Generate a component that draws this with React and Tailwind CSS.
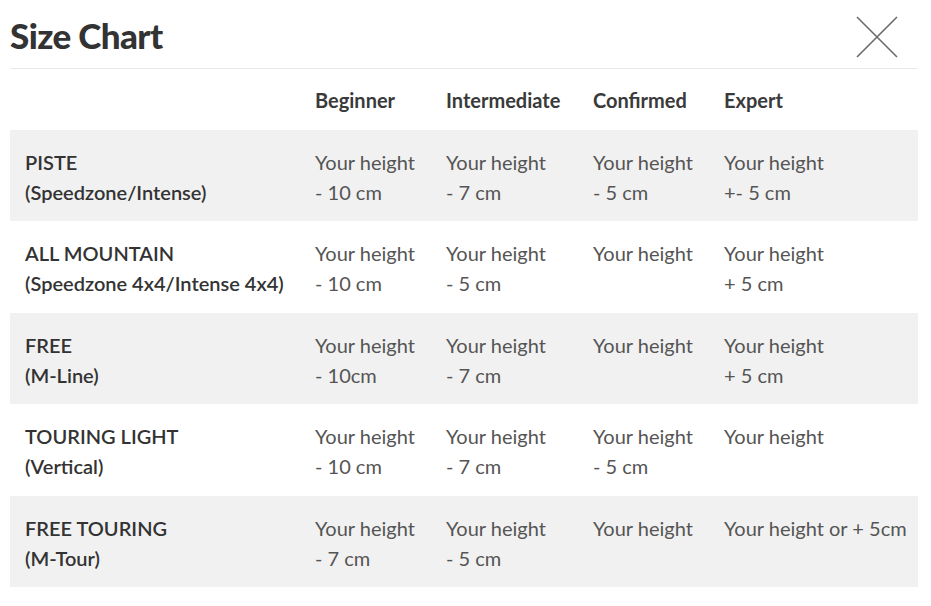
import React from 'react';

const cols = 'grid grid-cols-[290px_131px_147px_131px_1fr]';

const rows = [
  { name: 'PISTE', sub: '(Speedzone/Intense)', vals: [['Your height', '- 10 cm'], ['Your height', '- 7 cm'], ['Your height', '- 5 cm'], ['Your height', '+- 5 cm']] },
  { name: 'ALL MOUNTAIN', sub: '(Speedzone 4x4/Intense 4x4)', vals: [['Your height', '- 10 cm'], ['Your height', '- 5 cm'], ['Your height'], ['Your height', '+ 5 cm']] },
  { name: 'FREE', sub: '(M-Line)', vals: [['Your height', '- 10cm'], ['Your height', '- 7 cm'], ['Your height'], ['Your height', '+ 5 cm']] },
  { name: 'TOURING LIGHT', sub: '(Vertical)', vals: [['Your height', '- 10 cm'], ['Your height', '- 7 cm'], ['Your height', '- 5 cm'], ['Your height']] },
  { name: 'FREE TOURING', sub: '(M-Tour)', vals: [['Your height', '- 7 cm'], ['Your height', '- 5 cm'], ['Your height'], ['Your height or + 5cm']] },
];

export default function App() {
  return (
    <div className="w-[931px] h-[606px] bg-white pl-[10px] pr-[13px] font-['Lato','Liberation_Sans',sans-serif] text-[20px]">
      {/* header */}
      <div className="flex items-end justify-between h-[69px] border-b border-[#e8e8e8]">
        <h1 className="text-[35px] leading-none font-black text-[#333] tracking-[-0.6px] pb-[15px]">Size Chart</h1>
        <button className="mr-[20px] mb-[10px]" aria-label="Close">
          <svg width="42" height="42" viewBox="0 0 42 42" stroke="#6b6b6b" strokeWidth="1.6" fill="none">
            <path d="M1 1 L41 41 M41 1 L1 41" />
          </svg>
        </button>
      </div>

      {/* table */}
      <div className={`${cols} h-[61px] pt-[1px] items-center font-bold text-[#3a3a3a]`}>
        <div />
        <div className="pl-[15px]">Beginner</div>
        <div className="pl-[15px]">Intermediate</div>
        <div className="pl-[15px]">Confirmed</div>
        <div className="pl-[15px]">Expert</div>
      </div>
      {rows.map((r, i) => (
        <div key={r.name} className={`${cols} pt-[17px] pb-[14.4px] leading-[30px] ${i % 2 === 0 ? 'bg-[#f1f1f1]' : 'bg-white'}`}>
          <div className="pl-[15px] font-semibold text-[#333]">
            <div>{r.name}</div>
            <div>{r.sub}</div>
          </div>
          {r.vals.map((v, j) => (
            <div key={j} className="pl-[15px] text-[#555]">
              {v.map((line) => (
                <div key={line}>{line}</div>
              ))}
            </div>
          ))}
        </div>
      ))}
    </div>
  );
}
